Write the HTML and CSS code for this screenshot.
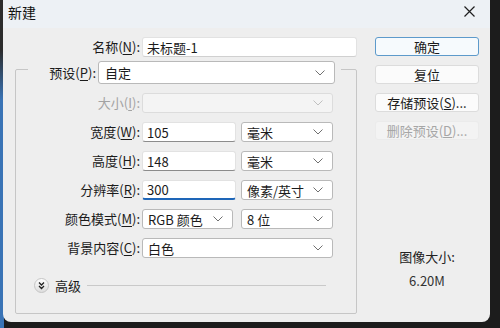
FILE: index.html
```html
<!DOCTYPE html>
<html lang="zh-CN">
  <head>
    <meta charset="UTF-8" />
    <meta name="viewport" content="width=device-width, initial-scale=1.0" />
    <title>新建</title>
    <link rel="stylesheet" href="styles.css">
  </head>
  <body>
    <div class="window">
      <div class="titlebar">
        <span class="title">新建</span>
        <svg class="close" width="11" height="11" viewBox="0 0 11 11">
          <path d="M0.5 0.5 L10.5 10.5 M10.5 0.5 L0.5 10.5" stroke="#1f1f1f" stroke-width="1.2" fill="none" />
        </svg>
      </div>

      <div class="main">
        <div class="form">
          <div class="row name-row">
            <label class="label">名称(<u>N</u>):</label>
            <input class="field name-field" type="text" value="未标题-1" />
          </div>

          <div class="group">
            <div class="legend">
              <label class="label">预设(<u>P</u>):</label>
              <div class="select preset"><span>自定</span>
                <svg class="chev" width="10" height="6" viewBox="0 0 10 6"><path d="M0.5 0.5 L5 5 L9.5 0.5" /></svg>
              </div>
            </div>

            <div class="row">
              <label class="label disabled">大小(<u>I</u>):</label>
              <div class="select wide off"><span></span>
                <svg class="chev" width="10" height="6" viewBox="0 0 10 6"><path d="M0.5 0.5 L5 5 L9.5 0.5" /></svg>
              </div>
            </div>

            <div class="row">
              <label class="label">宽度(<u>W</u>):</label>
              <input class="field num" type="text" value="105" />
              <div class="select unit"><span>毫米</span>
                <svg class="chev" width="10" height="6" viewBox="0 0 10 6"><path d="M0.5 0.5 L5 5 L9.5 0.5" /></svg>
              </div>
            </div>

            <div class="row">
              <label class="label">高度(<u>H</u>):</label>
              <input class="field num" type="text" value="148" />
              <div class="select unit"><span>毫米</span>
                <svg class="chev" width="10" height="6" viewBox="0 0 10 6"><path d="M0.5 0.5 L5 5 L9.5 0.5" /></svg>
              </div>
            </div>

            <div class="row">
              <label class="label">分辨率(<u>R</u>):</label>
              <input class="field num active" type="text" value="300" />
              <div class="select unit"><span>像素/英寸</span>
                <svg class="chev" width="10" height="6" viewBox="0 0 10 6"><path d="M0.5 0.5 L5 5 L9.5 0.5" /></svg>
              </div>
            </div>

            <div class="row">
              <label class="label">颜色模式(<u>M</u>):</label>
              <div class="select mode"><span>RGB 颜色</span>
                <svg class="chev" width="10" height="6" viewBox="0 0 10 6"><path d="M0.5 0.5 L5 5 L9.5 0.5" /></svg>
              </div>
              <div class="select unit"><span>8 位</span>
                <svg class="chev" width="10" height="6" viewBox="0 0 10 6"><path d="M0.5 0.5 L5 5 L9.5 0.5" /></svg>
              </div>
            </div>

            <div class="row">
              <label class="label">背景内容(<u>C</u>):</label>
              <div class="select wide"><span>白色</span>
                <svg class="chev" width="10" height="6" viewBox="0 0 10 6"><path d="M0.5 0.5 L5 5 L9.5 0.5" /></svg>
              </div>
            </div>

            <div class="advanced">
              <svg class="adv-icon" width="15" height="15" viewBox="0 0 15 15">
                <defs>
                  <linearGradient id="advfill" x1="0" y1="0" x2="0" y2="1">
                    <stop offset="0" stop-color="#ffffff" />
                    <stop offset="1" stop-color="#dcdcdc" />
                  </linearGradient>
                </defs>
                <circle cx="7.5" cy="7.5" r="7" fill="url(#advfill)" stroke="#c4c4c4" />
                <path d="M5 4.5 L7.5 7 L10 4.5 M5 8 L7.5 10.5 L10 8" stroke="#222" stroke-width="1.3" fill="none" />
              </svg>
              <span class="adv-text">高级</span>
              <span class="adv-line"></span>
            </div>
          </div>
        </div>

        <div class="side">
          <button class="btn default">确定</button>
          <button class="btn">复位</button>
          <button class="btn">存储预设(<u>S</u>)...</button>
          <button class="btn" disabled>删除预设(<u>D</u>)...</button>
          <div class="size-info">
            <div>图像大小:</div>
            <div class="size-value">6.20M</div>
          </div>
        </div>
      </div>
    </div>
  </body>
</html>
```

FILE: styles.css
```css
body {
  margin: 0;
  height: 328px;
  overflow: hidden;
  background-color: #1c1c1c;
  background-image: linear-gradient(to bottom, #2c2c2c 0, #2c2c2c 50px, #3a74b6 100px, #3a74b6 100%);
  background-size: 4px 100%;
  background-repeat: no-repeat;
  font-family: "Noto Sans CJK SC", "Noto Sans", sans-serif;
  font-size: 13px;
  color: #1b1b1b;
}
.window {
  width: 487px;
  height: 322px;
  margin-left: 3px;
  background-color: #eeeeee;
  border-radius: 0 0 8px 8px;
  display: flex;
  flex-direction: column;
  overflow: hidden;
}
.titlebar {
  height: 28px;
  background-color: #edf1f5;
  display: flex;
  align-items: center;
  justify-content: space-between;
  padding: 0 15px 0 5px;
}
.title {
  font-size: 14px;
  color: #111;
  margin-top: -5px;
}
.close {
  margin-top: -5px;
}
.main {
  display: flex;
  flex: 1;
}
.form {
  width: 354px;
  padding-top: 9px;
}
.row {
  display: flex;
  align-items: center;
  height: 20px;
  margin-top: 9px;
}
.name-row {
  margin-top: 0;
}
.label {
  width: 137px;
  text-align: right;
  margin-right: 2px;
  line-height: 20px;
  white-space: nowrap;
  flex-shrink: 0;
}
.label u {
  text-underline-offset: 2px;
}
.group .label {
  width: 124px;
}
.label.disabled {
  color: #a3a3a3;
}
.field {
  box-sizing: border-box;
  height: 20px;
  border: 1px solid #e2e2e2;
  border-bottom-color: #8c8c8c;
  border-radius: 3px;
  background: #ffffff;
  font-family: inherit;
  font-size: 13px;
  color: #1b1b1b;
  padding: 0 0 0 4px;
  outline: none;
}
.name-field {
  width: 216px;
  border-bottom-color: #d0d0d0;
}
.num {
  width: 94px;
  margin-right: 5px;
}
.active {
  border-bottom: 2px solid #1e66b8;
}
.group {
  margin: 12px 0 0 12px;
  width: 340px;
  height: 243px;
  border: 1px solid #c6c6c6;
  border-radius: 2px;
}
.legend {
  display: flex;
  align-items: center;
  width: 307px;
  margin: -9px 0 0 12px;
  padding-right: 6px;
  background-color: #eeeeee;
}
.legend .label {
  width: 68px;
}
.select {
  box-sizing: border-box;
  height: 20px;
  border: 1px solid #b9b9b9;
  border-radius: 3px;
  background: #ffffff;
  display: flex;
  align-items: center;
  justify-content: space-between;
  padding: 0 9px 0 5px;
  white-space: nowrap;
}
.chev path {
  stroke: #707070;
  stroke-width: 1;
  fill: none;
}
.preset {
  width: 243px;
  height: 23px;
  padding-left: 6px;
}
.wide {
  width: 191px;
}
.unit {
  width: 92px;
}
.mode {
  width: 91px;
  margin-right: 8px;
}
.off {
  background: #f4f4f4;
  border-color: #dcdcdc;
}
.off .chev path {
  stroke: #c0c0c0;
}
.advanced {
  display: flex;
  align-items: center;
  height: 16px;
  margin: 19px 30px 0 18px;
}
.adv-text {
  margin-left: 6px;
}
.adv-line {
  flex: 1;
  height: 1px;
  background-color: #c9c9c9;
  margin-left: 6px;
}
.side {
  width: 104px;
  margin-left: 18px;
  padding-top: 9px;
  display: flex;
  flex-direction: column;
}
.btn {
  box-sizing: border-box;
  height: 19px;
  margin-bottom: 9px;
  border: 1px solid #dcdcdc;
  border-radius: 3px;
  background: #fbfbfb;
  font-family: inherit;
  font-size: 13px;
  color: #1b1b1b;
  padding: 0;
  line-height: 17px;
}
.btn.default {
  border-color: #5d9acb;
  background: #f6fafd;
}
.btn:disabled {
  background: #f3f3f3;
  border-color: #ebebeb;
  color: #a6a6a6;
}
.size-info {
  margin-top: 100px;
  text-align: center;
  line-height: 16px;
  color: #222;
}
.size-value {
  margin-top: 8px;
  color: #333;
}
```
